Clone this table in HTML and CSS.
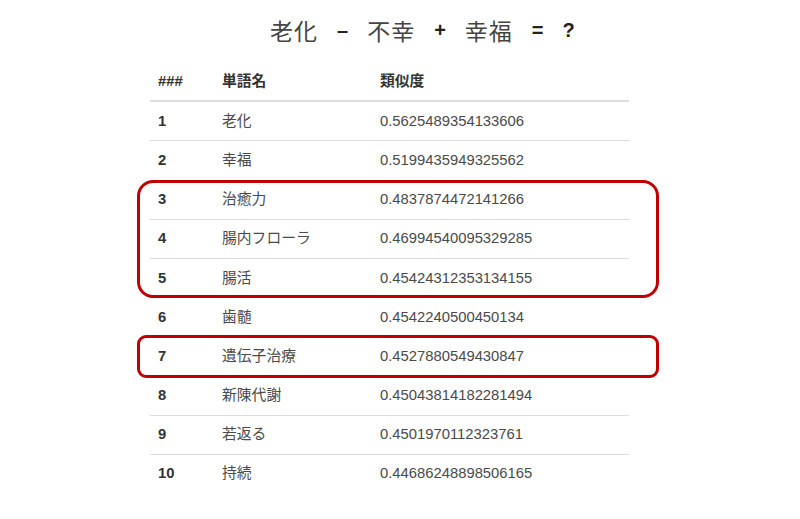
FILE: index.html
```html
<!DOCTYPE html>
<html lang="ja">
<head>
<meta charset="utf-8">
<title>word2vec</title>
<link rel="stylesheet" href="styles.css">
</head>
<body>
<h1 class="equation">
  <span class="term">老化</span>
  <span class="op">–</span>
  <span class="term">不幸</span>
  <span class="op">+</span>
  <span class="term">幸福</span>
  <span class="op">=</span>
  <span class="op">?</span>
</h1>
<div class="table-wrap">
  <table class="result">
    <thead>
      <tr><th class="c-rank">###</th><th class="c-word">単語名</th><th class="c-sim">類似度</th></tr>
    </thead>
    <tbody>
      <tr><td class="rank">1</td><td>老化</td><td>0.5625489354133606</td></tr>
      <tr><td class="rank">2</td><td>幸福</td><td>0.5199435949325562</td></tr>
      <tr><td class="rank">3</td><td>治癒力</td><td>0.4837874472141266</td></tr>
      <tr><td class="rank">4</td><td>腸内フローラ</td><td>0.46994540095329285</td></tr>
      <tr><td class="rank">5</td><td>腸活</td><td>0.45424312353134155</td></tr>
      <tr><td class="rank">6</td><td>歯髄</td><td>0.4542240500450134</td></tr>
      <tr><td class="rank">7</td><td>遺伝子治療</td><td>0.4527880549430847</td></tr>
      <tr><td class="rank">8</td><td>新陳代謝</td><td>0.45043814182281494</td></tr>
      <tr><td class="rank">9</td><td>若返る</td><td>0.4501970112323761</td></tr>
      <tr><td class="rank">10</td><td>持続</td><td>0.44686248898506165</td></tr>
    </tbody>
  </table>
  <div class="mark mark-a"></div>
  <div class="mark mark-b"></div>
</div>
</body>
</html>
```

FILE: styles.css
```css
html, body {
  margin: 0;
  padding: 0;
  background: #fff;
}
body {
  width: 800px;
  height: 519px;
  overflow: hidden;
  font-family: "Liberation Sans", "Noto Sans CJK JP", sans-serif;
  color: #333;
}
.equation {
  margin: 0;
  padding: 15px 0 0 270px;
  display: flex;
  align-items: center;
  gap: 19px;
  height: 30px;
  line-height: 30px;
  font-weight: normal;
}
.term {
  font-family: "Noto Sans CJK JP", sans-serif;
  font-size: 23px;
  font-weight: 400;
  color: #444;
  letter-spacing: 1px;
}
.op {
  font-family: "Liberation Sans", sans-serif;
  font-size: 20px;
  font-weight: bold;
  color: #222;
}
.table-wrap {
  position: relative;
  margin: 17px 0 0 150px;
  width: 479px;
}
.result {
  width: 479px;
  border-collapse: collapse;
  border-spacing: 0;
  font-size: 14.8px;
  line-height: 21px;
}
.result th, .result td {
  padding: 8.6px 8px;
  text-align: left;
  vertical-align: middle;
  height: 21px;
  box-sizing: content-box;
}
.result th {
  font-weight: bold;
  border-bottom: 2px solid #dddddd;
  color: #333;
}
.result tbody tr + tr td {
  border-top: 1px solid #dddddd;
}
.result td {
  color: #4a4a4a;
}
.result td.rank {
  font-weight: bold;
  color: #333;
}
.c-rank { width: 48px; }
.c-word { width: 142px; }
.mark {
  position: absolute;
  left: -13px;
  width: 522px;
  box-sizing: border-box;
  border: 3px solid #c00000;
  pointer-events: none;
}
.mark-a {
  top: 118px;
  height: 118px;
  border-radius: 16px;
}
.mark-b {
  top: 273px;
  height: 43px;
  border-radius: 9px;
}
```
